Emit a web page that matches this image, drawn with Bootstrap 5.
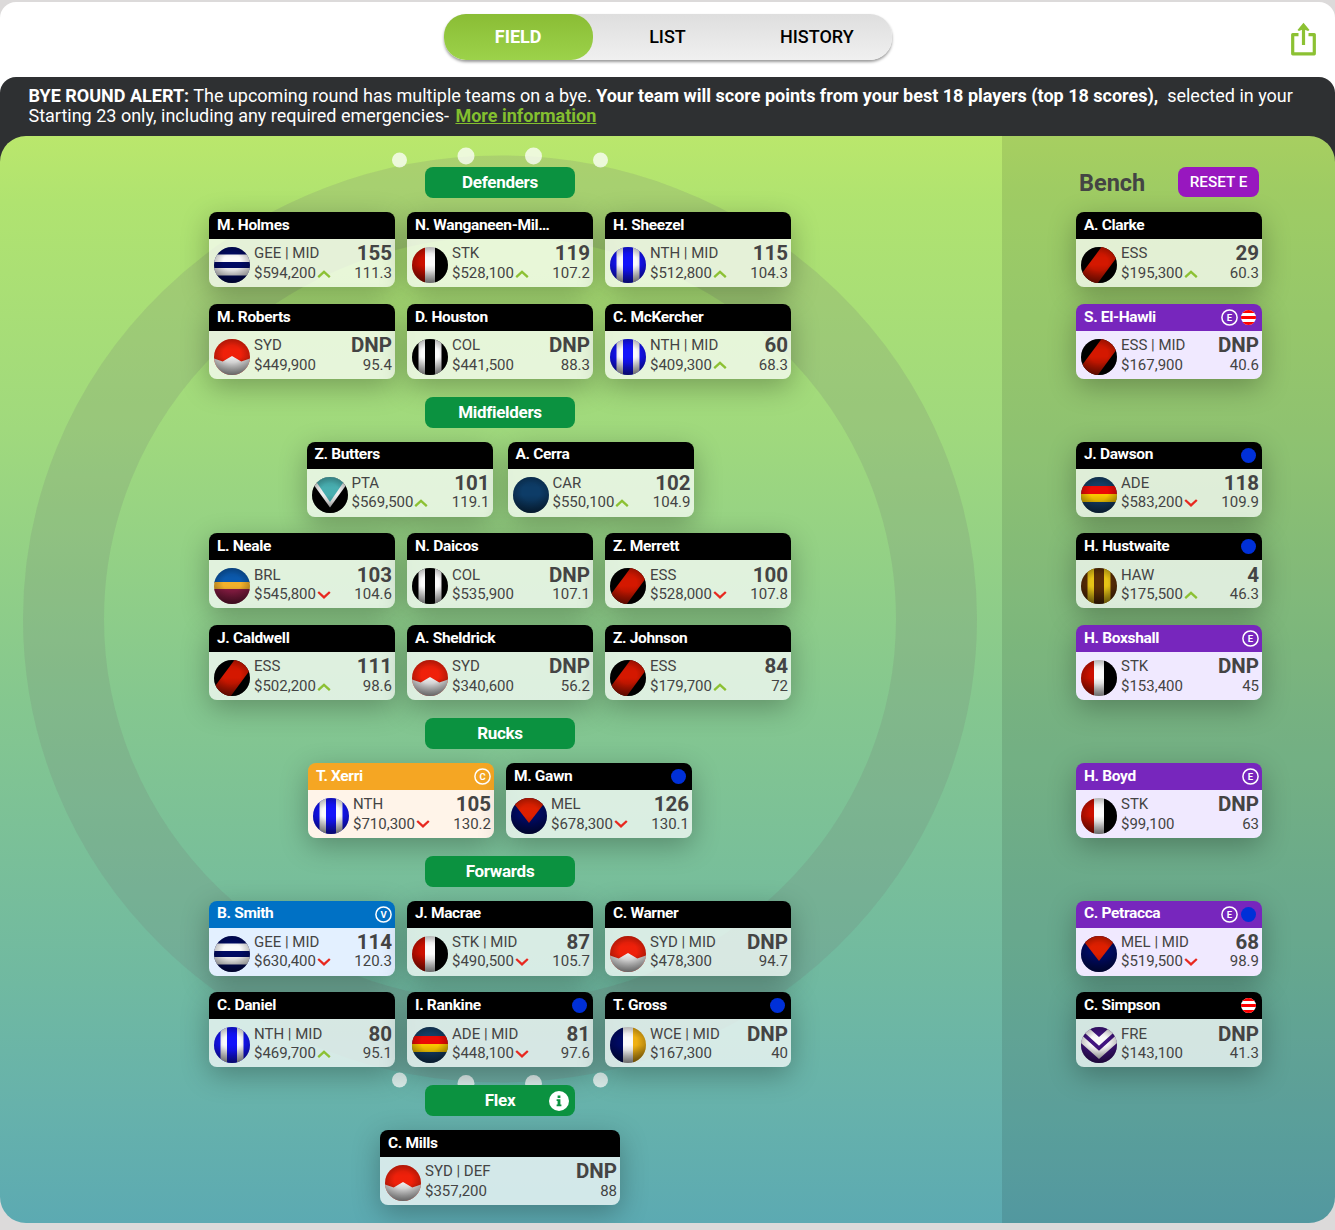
<!DOCTYPE html>
<html lang="en">
<head>
  <meta charset="UTF-8" />
  <meta name="viewport" content="width=device-width, initial-scale=1.0" />
  <title>My Team - Field</title>
  <link href="https://cdn.jsdelivr.net/npm/bootstrap@5.3.0/dist/css/bootstrap.min.css" rel="stylesheet" />
  <style>
    body {
      background-color: #dcdada;
      font-family: Roboto, "Liberation Sans", sans-serif;
      color: #444;
      overflow: hidden;
    }
    .page {
      margin-top: 2px;
      border-radius: 16px 16px 0 0;
      background: linear-gradient(#fff 200px, transparent 200px);
    }
    .topbar {
      height: 75px;
      padding-top: 12px;
    }
    .tabs {
      width: 448px;
      height: 46px;
      border-radius: 22px;
      background: linear-gradient(#dedede, #f0f0f0);
      box-shadow: 0 2px 3px rgba(0,0,0,.4);
    }
    .tabs a {
      color: #000;
      font-size: 18px;
      font-weight: 500;
      line-height: 46px;
    }
    .tabs a.on {
      color: #fff;
      font-weight: 700;
      border-radius: 22px;
      background: linear-gradient(#8abd35, #9cd24a);
    }
    .share {
      right: 18px;
      top: 20px;
    }
    .notice {
      background: linear-gradient(#2e3032 100px, transparent 100px);
      border-radius: 16px 16px 0 0;
    }
    .notice-text {
      height: 59px;
      padding: 9px 20px 0 28.5px;
      color: #fff;
      font-size: 18px;
      line-height: 20px;
    }
    .notice-text a { color: #83bf2f; margin-left: 2px; }
    .ground {
      height: 1087px;
      border-radius: 26px;
      background: linear-gradient(#bae76c 0, #b0e370 6%, #a0d97d 27%, #85c78f 52%, #70b9a1 78%, #67b2ab 89%, #5caab2 100%);
    }
    .oval { left: 0; top: 0; }
    .field { width: 1002px; padding: 30px 2px 0 0; }
    .bench { width: 333px; padding-top: 30px; background: rgba(0,0,0,.1); }
    .bench-list { width: 186px; margin-left: 74px; }
    .sect { height: 46.1px; padding-top: 1.2px; }
    .pos-label {
      width: 150px;
      height: 31.3px;
      margin: 0 auto;
      border-radius: 8px;
      background: #0b9240;
      color: #fff;
      font-size: 17px;
      font-weight: 700;
      letter-spacing: -.3px;
      line-height: 31.4px;
    }
    .pos-label svg { right: 6px; top: 6px; }
    .line { height: 91.7px; gap: 12px; }
    .line.wide { gap: 15px; }
    .player {
      width: 186px;
      height: 75px;
      border-radius: 8px;
      box-shadow: 0 8px 28px rgba(0,0,0,.28);
    }
    .player.long { width: 240px; }
    .p-name {
      height: 27px;
      padding: 0 3px 0 8px;
      border-radius: 8px 8px 0 0;
      background: #000;
      color: #fff;
      font-size: 15.5px;
      font-weight: 700;
      letter-spacing: -.35px;
    }
    .p-name svg { margin-left: 3px; }
    .p-name .dot:last-child { margin-right: 3px; }
    .p-body {
      height: 48px;
      padding: 5px 3px 0 5px;
      border-radius: 0 0 8px 8px;
      background: rgba(255,255,255,.72);
      font-size: 15px;
      line-height: 19.5px;
    }
    .jumper { border-radius: 50%; margin: 3px 4px 0 0; }
    .p-team, .p-points { padding-top: .4px; }
    .p-team svg { margin-left: 1px; }
    .p-score { font-size: 20.5px; font-weight: 700; }
    .cap .p-name { background: #f5a623; }
    .cap .p-body { background: #fff4e9; }
    .vice .p-name { background: #0071c5; }
    .vice .p-body { background: #e3f0ff; }
    .emg .p-name { background: #7726bd; }
    .emg .p-body { background: #f0e9ff; }
    .bench-title { font-size: 23.5px; font-weight: 700; line-height: 32px; padding-left: 3px; }
    .reset {
      width: 81px;
      height: 30px;
      margin-right: 3px;
      padding: 0;
      border-radius: 8px;
      background: #9817bf;
      color: #fff;
      font-size: 15.3px;
      font-weight: 500;
      line-height: 29px;
    }
  </style>
</head>
<body>
  <!-- jumper shapes, one per club -->
  <svg width="0" height="0" class="position-absolute" aria-hidden="true">
    <defs>
      <linearGradient id="shadeV" x1="0" y1="0" x2="0" y2="1">
        <stop offset="0" stop-color="#000" stop-opacity=".16" />
        <stop offset=".3" stop-color="#000" stop-opacity=".02" />
        <stop offset=".5" stop-color="#000" stop-opacity=".02" />
        <stop offset="1" stop-color="#000" stop-opacity=".4" />
      </linearGradient>
      <radialGradient id="shadeR" cx=".5" cy=".42" r=".6">
        <stop offset=".4" stop-color="#000" stop-opacity="0" />
        <stop offset="1" stop-color="#000" stop-opacity=".32" />
      </radialGradient>
    </defs>
    <symbol id="GEE" viewBox="0 0 36 36"><path fill="#000a66" d="M0 0h36v36H0z" /><path fill="#fff" d="M0 7.500h36v7.500H0zM0 21h36v7.500H0z" /></symbol>
    <symbol id="STK" viewBox="0 0 36 36"><path fill="#d01000" d="M0 0h13v36H0z" /><path fill="#fff" d="M13 0h10v36H13z" /><path d="M23 0h13v36H23z" /></symbol>
    <symbol id="NTH" viewBox="0 0 36 36"><path fill="#1414ff" d="M0 0h36v36H0z" /><path fill="#fff" d="M6.500 0H13v36H6.500zM23 0h6.500v36H23z" /></symbol>
    <symbol id="SYD" viewBox="0 0 36 36"><path fill="#f4210a" d="M0 0h36v36H0z" /><path fill="#f2f2f2" d="M0 19.500L8.700 22.500 18 17l9.300 5.500L36 19.500V36H0z" /></symbol>
    <symbol id="COL" viewBox="0 0 36 36"><path d="M0 0h36v36H0z" /><path fill="#fff" d="M6.500 0H13v36H6.500zM23 0h6.500v36H23z" /></symbol>
    <symbol id="PTA" viewBox="0 0 36 36"><path d="M0 0h36v36H0z" /><path fill="#f2f2f2" d="M-4 0h44L18 30.500z" /><path fill="#4ab2b4" d="M1 0h34L18 25z" /></symbol>
    <symbol id="CAR" viewBox="0 0 36 36"><path fill="#0d3d69" d="M0 0h36v36H0z" /></symbol>
    <symbol id="ADE" viewBox="0 0 36 36"><path fill="#16416a" d="M0 0h36v36H0z" /><path fill="#f00a05" d="M0 9h36v8H0z" /><path fill="#fc0" d="M0 17h36v8H0z" /></symbol>
    <symbol id="HAW" viewBox="0 0 36 36"><path fill="#5e2f05" d="M0 0h36v36H0z" /><path fill="#ecc716" d="M6.500 0H13v36H6.500zM23 0h6.500v36H23z" /></symbol>
    <symbol id="ESS" viewBox="0 0 36 36"><path d="M0 0h36v36H0z" /><path fill="#d81800" d="M22-2L0 27.500 15 38.500 37.500 8z" /></symbol>
    <symbol id="MEL" viewBox="0 0 36 36"><path fill="#000a66" d="M0 0h36v36H0z" /><path fill="#e32000" d="M-1.400 0h38.800L18 25z" /></symbol>
    <symbol id="WCE" viewBox="0 0 36 36"><path fill="#000a66" d="M0 0h13v36H0z" /><path fill="#fff" d="M13 0h10v36H13z" /><path fill="#f4b414" d="M23 0h13v36H23z" /></symbol>
    <symbol id="FRE" viewBox="0 0 36 36"><path fill="#431583" d="M0 0h36v36H0z" /><path fill="#fff" d="M0 2.500V-6L18 10 36-6v8.500L18 18.700zM0 7.500L18 23.800 36 7.500V16L18 32 0 16z" /></symbol>
    <symbol id="BRL" viewBox="0 0 36 36"><path fill="#0b5bb0" d="M0 0h36v15H0z" /><path fill="#f7b52c" d="M0 14h36v7H0z" /><path fill="#8c1d45" d="M0 21h36v15H0z" /></symbol>
  </svg>

  <div class="page">
    <header class="topbar position-relative">
      <nav class="tabs d-flex mx-auto text-center">
        <a class="on flex-fill w-100 text-decoration-none">FIELD</a>
        <a class="flex-fill w-100 text-decoration-none">LIST</a>
        <a class="flex-fill w-100 text-decoration-none">HISTORY</a>
      </nav>
      <svg class="share position-absolute" width="27" height="34" viewBox="0 0 27 34" fill="none" stroke="#8cc133" stroke-width="3.2">
        <path d="M8.500 12.600H2.700v19.200h21.600V12.600h-5.800" stroke-linejoin="round" />
        <path d="M13.500 23V5" />
        <path d="M13.500 .8l6 7.200-1.400 1-4.600-1.800L8.900 9l-1.400-1z" fill="#8cc133" stroke="none" />
      </svg>
    </header>

    <div class="notice">
      <div class="notice-text"><b>BYE ROUND ALERT:</b> The upcoming round has multiple teams on a bye. <b>Your team will score points from your best 18 players (top 18 scores),</b>&nbsp; selected in your Starting 23 only, including any required emergencies- <a href="#" class="fw-bold">More information</a></div>

      <main class="ground d-flex position-relative overflow-hidden">
        <svg class="oval position-absolute" width="1002" height="1087" viewBox="0 136 1002 1087">
          <ellipse cx="500" cy="619" rx="436.500" ry="423" fill="none" stroke="#777" stroke-opacity=".18" stroke-width="81" />
          <g fill="#fff" fill-opacity=".75">
            <circle cx="399.500" cy="160" r="7.500" /><circle cx="466" cy="156" r="8.500" />
            <circle cx="533.500" cy="156" r="8.500" /><circle cx="600.500" cy="160" r="7.500" />
            <circle cx="399.500" cy="1080" r="7.500" /><circle cx="466" cy="1083.500" r="8.500" />
            <circle cx="533.500" cy="1083.500" r="8.500" /><circle cx="600.500" cy="1080" r="7.500" />
          </g>
        </svg>
        <section class="field position-relative" id="field"></section>
        <aside class="bench position-relative"><div class="bench-list" id="bench"></div></aside>
      </main>
    </div>
  </div>

  <script>
    // [name, club, position, price, trend, score, average, flags]
    // flags: C captain, V vice, E emergency, o blue dot, r striped dot
    const lines = [
      { label: "Defenders" },
      [["M. Holmes", "GEE", "MID", "$594,200", "up", "155", "111.3"],
       ["N. Wanganeen-Mil…", "STK", "", "$528,100", "up", "119", "107.2"],
       ["H. Sheezel", "NTH", "MID", "$512,800", "up", "115", "104.3"]],
      [["M. Roberts", "SYD", "", "$449,900", "", "DNP", "95.4"],
       ["D. Houston", "COL", "", "$441,500", "", "DNP", "88.3"],
       ["C. McKercher", "NTH", "MID", "$409,300", "up", "60", "68.3"]],
      { label: "Midfielders" },
      [["Z. Butters", "PTA", "", "$569,500", "up", "101", "119.1"],
       ["A. Cerra", "CAR", "", "$550,100", "up", "102", "104.9"]],
      [["L. Neale", "BRL", "", "$545,800", "down", "103", "104.6"],
       ["N. Daicos", "COL", "", "$535,900", "", "DNP", "107.1"],
       ["Z. Merrett", "ESS", "", "$528,000", "down", "100", "107.8"]],
      [["J. Caldwell", "ESS", "", "$502,200", "up", "111", "98.6"],
       ["A. Sheldrick", "SYD", "", "$340,600", "", "DNP", "56.2"],
       ["Z. Johnson", "ESS", "", "$179,700", "up", "84", "72"]],
      { label: "Rucks" },
      [["T. Xerri", "NTH", "", "$710,300", "down", "105", "130.2", "C"],
       ["M. Gawn", "MEL", "", "$678,300", "down", "126", "130.1", "o"]],
      { label: "Forwards" },
      [["B. Smith", "GEE", "MID", "$630,400", "down", "114", "120.3", "V"],
       ["J. Macrae", "STK", "MID", "$490,500", "down", "87", "105.7"],
       ["C. Warner", "SYD", "MID", "$478,300", "", "DNP", "94.7"]],
      [["C. Daniel", "NTH", "MID", "$469,700", "up", "80", "95.1"],
       ["I. Rankine", "ADE", "MID", "$448,100", "down", "81", "97.6", "o"],
       ["T. Gross", "WCE", "MID", "$167,300", "", "DNP", "40", "o"]],
      { label: "Flex", info: true },
      [["C. Mills", "SYD", "DEF", "$357,200", "", "DNP", "88"]]
    ];

    // null leaves the space of a position heading
    const bench = [
      ["A. Clarke", "ESS", "", "$195,300", "up", "29", "60.3"],
      ["S. El-Hawli", "ESS", "MID", "$167,900", "", "DNP", "40.6", "Er"],
      null,
      ["J. Dawson", "ADE", "", "$583,200", "down", "118", "109.9", "o"],
      ["H. Hustwaite", "HAW", "", "$175,500", "up", "4", "46.3", "o"],
      ["H. Boxshall", "STK", "", "$153,400", "", "DNP", "45", "E"],
      null,
      ["H. Boyd", "STK", "", "$99,100", "", "DNP", "63", "E"],
      null,
      ["C. Petracca", "MEL", "MID", "$519,500", "down", "68", "98.9", "Eo"],
      ["C. Simpson", "FRE", "", "$143,100", "", "DNP", "41.3", "r"]
    ];

    const arrows = {
      up: '<svg width="14" height="8" viewBox="0 0 14 8"><path d="M1.200 7.200L7 1.900 12.800 7.200" fill="none" stroke="#8cc133" stroke-width="2.300"/></svg>',
      down: '<svg width="14" height="8" viewBox="0 0 14 8"><path d="M1.200 1L7 6.400 12.800 1" fill="none" stroke="#e8281f" stroke-width="2.300"/></svg>'
    };

    function flag(f) {
      if (f === "o") return '<svg class="dot" width="15" height="15"><circle cx="7.500" cy="7.500" r="7.500" fill="#0030d8"/></svg>';
      if (f === "r") return '<svg class="dot rounded-circle" width="15" height="15"><path fill="#fff" d="M0 0h15v15H0z"/><path fill="#f00" d="M0 0h15v3H0zM0 6h15v3H0zM0 12h15v3H0z"/></svg>';
      return `<svg width="17" height="17"><circle cx="8.500" cy="8.500" r="7.600" fill="none" stroke="#fff" stroke-width="1.500"/><text x="8.500" y="12" text-anchor="middle" font-size="9.500" font-weight="700" letter-spacing="0" fill="#fff">${f}</text></svg>`;
    }

    function card(p, extra = "") {
      const [name, club, pos, price, trend, score, avg, flags = ""] = p;
      const kind = flags.includes("C") ? "cap" : flags.includes("V") ? "vice" : flags.includes("E") ? "emg" : "";
      return `
        <div class="player ${kind} ${extra}">
          <div class="p-name d-flex align-items-center"><span class="me-auto">${name}</span>${[...flags].map(flag).join("")}</div>
          <div class="p-body d-flex">
            <svg class="jumper flex-shrink-0" width="36" height="36" viewBox="0 0 36 36"><use href="#${club}"/><path fill="url(#shadeV)" d="M0 0h36v36H0z"/><path fill="url(#shadeR)" d="M0 0h36v36H0z"/></svg>
            <div class="p-team me-auto text-nowrap">
              <div>${club}${pos ? " | " + pos : ""}</div>
              <div class="d-flex align-items-center">${price}${arrows[trend] || ""}</div>
            </div>
            <div class="p-points text-end">
              <div class="p-score">${score}</div>
              <div>${avg}</div>
            </div>
          </div>
        </div>`;
    }

    const infoIcon = '<svg class="position-absolute" width="20" height="20"><circle cx="10" cy="10" r="10" fill="#fff"/><path fill="#0b9240" d="M8.600 4.500h2.800v2.400H8.600zM7.600 8.200h3.800v5.300h1v1.800H7.600v-1.800h1V10h-1z"/></svg>';

    document.getElementById("field").innerHTML = lines.map(l => {
      if (l.label) return `<div class="sect"><div class="pos-label text-center position-relative">${l.label}${l.info ? infoIcon : ""}</div></div>`;
      const gap = l[0][0] === "Z. Butters" ? "wide" : "";
      return `<div class="line ${gap} d-flex justify-content-center align-items-start">${l.map(p => card(p, l.length === 1 ? "long" : "")).join("")}</div>`;
    }).join("");

    document.getElementById("bench").innerHTML =
      '<div class="sect d-flex justify-content-between align-items-start"><span class="bench-title">Bench</span><button class="btn reset">RESET E</button></div>' +
      bench.map(p => p ? `<div class="line">${card(p)}</div>` : '<div class="sect"></div>').join("");
  </script>
  <script src="https://cdn.jsdelivr.net/npm/bootstrap@5.3.0/dist/js/bootstrap.bundle.min.js"></script>
</body>
</html>
